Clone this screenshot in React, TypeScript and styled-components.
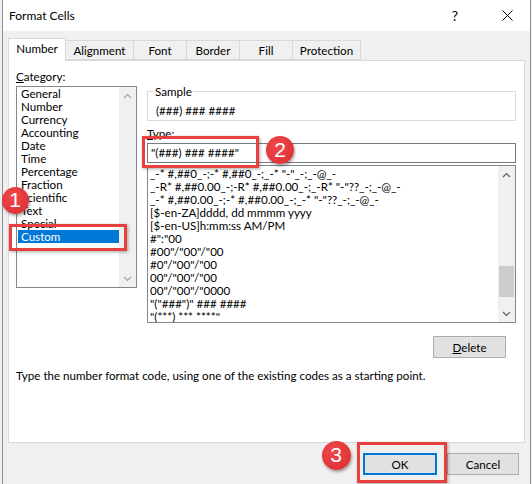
import styled, { createGlobalStyle } from 'styled-components';

const GlobalStyle = createGlobalStyle`
  html, body {
    margin: 0;
    padding: 0;
  }
  body {
    font-family: Lato, "Noto Sans", "Liberation Sans", sans-serif;
    font-size: 11.6px;
    color: #000;
    background: #f0f0f0;
  }
`;

const Page = styled.div`
    position: relative;
    width: 532px;
    height: 484px;
    overflow: hidden;
    padding-left: 2px;
    box-sizing: border-box;
`;

const Window = styled.div`
    width: 529px;
    height: 484px;
    box-sizing: border-box;
    background: #f0f0f0;
    border-left: 1px solid #8f8f8f;
    border-right: 1px solid #8f8f8f;
    display: flex;
    flex-direction: column;
`;

const TitleBar = styled.div`
    height: 31px;
    background: #fff;
    display: flex;
    align-items: center;
    padding-left: 6px;
    font-size: 12px;
`;

const Title = styled.span`
    flex: 1;
`;

const TitleButton = styled.div<{ $gap?: number }>`
    width: 46px;
    height: 31px;
    margin-right: ${p => p.$gap || 0}px;
    display: flex;
    align-items: center;
    justify-content: center;
    font-size: 14px;
`;

const Body = styled.div`
    padding: 7px 5px 0 5px;
    display: flex;
    flex-direction: column;
`;

const TabRow = styled.div`
    display: flex;
    align-items: flex-end;
    height: 22px;
`;

const Tab = styled.div<{ $active?: boolean; $w: number }>`
    width: ${p => p.$w}px;
    height: ${p => (p.$active ? 23 : 20)}px;
    margin-bottom: ${p => (p.$active ? -1 : 0)}px;
    margin-left: -1px;
    box-sizing: border-box;
    border: 1px solid #d9d9d9;
    border-bottom: ${p => (p.$active ? 'none' : '1px solid #d9d9d9')};
    background: ${p => (p.$active ? '#fff' : '#f0f0f0')};
    position: relative;
    z-index: ${p => (p.$active ? 2 : 1)};
    display: flex;
    align-items: ${p => (p.$active ? 'flex-start' : 'center')};
    padding-top: ${p => (p.$active ? 3 : 0)}px;
    justify-content: center;

    &:first-child {
        margin-left: 0;
    }
`;

const Panel = styled.div`
    height: 383px;
    box-sizing: border-box;
    background: #fff;
    border: 1px solid #d9d9d9;
    display: grid;
    grid-template-columns: 121px 369px;
    align-content: start;
    column-gap: 10px;
    padding: 0 7px;
`;

const Column = styled.div<{ $top: number }>`
    display: flex;
    flex-direction: column;
    padding-top: ${p => p.$top}px;
`;

const Label = styled.div`
    line-height: 15px;
    height: 15px;

    u {
        text-decoration: underline;
    }
`;

const ListBox = styled.div<{ $h: number }>`
    height: ${p => p.$h}px;
    margin-top: 2px;
    box-sizing: border-box;
    border: 1px solid #828790;
    display: flex;
    background: #fff;
`;

const Items = styled.div<{ $pad: number }>`
    flex: 1;
    padding: ${p => p.$pad}px 0 0 1px;
    overflow: hidden;
`;

const Item = styled.div<{ $selected?: boolean; $indent?: number }>`
    height: 13px;
    line-height: 13px;
    padding-left: ${p => p.$indent ?? 3}px;
    white-space: nowrap;
    background: ${p => (p.$selected ? '#0078d7' : 'transparent')};
    color: ${p => (p.$selected ? '#fff' : '#000')};
`;

const Scrollbar = styled.div`
    width: 17px;
    background: #f0f0f0;
    display: flex;
    flex-direction: column;
`;

const ScrollArrow = styled.div`
    height: 17px;
    display: flex;
    align-items: center;
    justify-content: center;
`;

const Track = styled.div`
    flex: 1;
    display: flex;
    flex-direction: column;
`;

const Thumb = styled.div<{ $top: number; $h: number }>`
    margin: ${p => p.$top}px 1px 0 1px;
    height: ${p => p.$h}px;
    background: #cdcdcd;
`;

const SampleBox = styled.fieldset`
    margin: 0;
    padding: 0 0 0 8px;
    height: 37px;
    box-sizing: border-box;
    border: 1px solid #dcdcdc;

    legend {
        padding: 0 1px;
        margin-left: -2px;
        line-height: 15px;
    }
`;

const SampleText = styled.div`
    line-height: 15px;
    margin-top: 4px;
`;

const TypeLabel = styled(Label)`
    margin-top: 5px;
`;

const TypeInput = styled.div`
    margin-top: 2px;
    height: 20px;
    box-sizing: border-box;
    border: 1px solid #7a7a7a;
    padding-left: 3px;
    line-height: 18px;
`;

const Button = styled.div<{ $w: number; $default?: boolean }>`
    width: ${p => p.$w}px;
    height: 22px;
    box-sizing: border-box;
    background: #e1e1e1;
    border: 1px solid ${p => (p.$default ? '#0078d7' : '#adadad')};
    box-shadow: ${p => (p.$default ? 'inset 0 0 0 1px #0078d7' : 'none')};
    display: flex;
    align-items: center;
    justify-content: center;

    u {
        text-decoration: underline;
    }
`;

const DeleteRow = styled.div`
    display: flex;
    justify-content: flex-end;
    padding-right: 10px;
    margin-top: 13px;
`;

const Hint = styled.div`
    grid-column: 1 / -1;
    margin-top: 10px;
    line-height: 15px;
`;

const Footer = styled.div`
    display: flex;
    justify-content: flex-end;
    gap: 10px;
    padding: 10px 6px 0 0;
`;

const Highlight = styled.div<{ $x: number; $y: number; $w: number; $h: number }>`
    position: absolute;
    left: ${p => p.$x}px;
    top: ${p => p.$y}px;
    width: ${p => p.$w}px;
    height: ${p => p.$h}px;
    box-sizing: border-box;
    border: 3px solid #e8403f;
    box-shadow: 1px 1px 3px rgba(0, 0, 0, 0.35);
    pointer-events: none;
`;

const Badge = styled.div<{ $x: number; $y: number; $d: number }>`
    position: absolute;
    left: ${p => p.$x - p.$d / 2}px;
    top: ${p => p.$y - p.$d / 2}px;
    width: ${p => p.$d}px;
    height: ${p => p.$d}px;
    border-radius: 50%;
    background: radial-gradient(circle at 40% 35%, #f0484a, #d92b2f);
    box-shadow: 1px 2px 3px rgba(0, 0, 0, 0.35);
    color: #fff;
    font-family: "Liberation Sans", Arial, sans-serif;
    font-size: 21px;
    display: flex;
    align-items: center;
    justify-content: center;
`;

const Chevron = ({ up, color }: { up?: boolean; color: string }) => (
    <svg width="9" height="6" viewBox="0 0 9 6">
        <polyline
            points={up ? '1,5 4.5,1.5 8,5' : '1,1 4.5,4.5 8,1'}
            fill="none"
            stroke={color}
            strokeWidth="1.2"
        />
    </svg>
);

const categories = [
    'General', 'Number', 'Currency', 'Accounting', 'Date', 'Time',
    'Percentage', 'Fraction', 'Scientific', 'Text', 'Special', 'Custom',
];

const formats = [
    '_-* #,##0_-;-* #,##0_-;_-* "-"_-;_-@_-',
    '_-R* #,##0.00_-;-R* #,##0.00_-;_-R* "-"??_-;_-@_-',
    '_-* #,##0.00_-;-* #,##0.00_-;_-* "-"??_-;_-@_-',
    '[$-en-ZA]dddd, dd mmmm yyyy',
    '[$-en-US]h:mm:ss AM/PM',
    '#":"00',
    '#00"/"00"/"00',
    '#0"/"00"/"00',
    '00"/"00"/"00',
    '00"/"00"/"0000',
    '"("###")" ### ####',
    '"(***) *** ****"',
];

const tabs = [
    { name: 'Number', w: 58 },
    { name: 'Alignment', w: 69 },
    { name: 'Font', w: 54 },
    { name: 'Border', w: 54 },
    { name: 'Fill', w: 54 },
    { name: 'Protection', w: 69 },
];

const App = () => {
    return (
        <Page>
            <GlobalStyle />
            <Window>
                <TitleBar>
                    <Title>Format Cells</Title>
                    <TitleButton $gap={6}>?</TitleButton>
                    <TitleButton>
                        <svg width="11" height="11" viewBox="0 0 11 11">
                            <path d="M0.5 0.5 L10.5 10.5 M10.5 0.5 L0.5 10.5" stroke="#000" strokeWidth="1" />
                        </svg>
                    </TitleButton>
                </TitleBar>
                <Body>
                    <TabRow>
                        {tabs.map((t, i) => (
                            <Tab key={t.name} $w={t.w} $active={i === 0}>{t.name}</Tab>
                        ))}
                    </TabRow>
                    <Panel>
                        <Column $top={8}>
                            <Label><u>C</u>ategory:</Label>
                            <ListBox $h={202}>
                                <Items $pad={0}>
                                    {categories.map(c => (
                                        <Item key={c} $selected={c === 'Custom'}>{c}</Item>
                                    ))}
                                </Items>
                                <Scrollbar>
                                    <ScrollArrow><Chevron up color="#a3a3a3" /></ScrollArrow>
                                    <Track />
                                    <ScrollArrow><Chevron color="#a3a3a3" /></ScrollArrow>
                                </Scrollbar>
                            </ListBox>
                        </Column>
                        <Column $top={23}>
                            <SampleBox>
                                <legend>Sample</legend>
                                <SampleText>(###) ### ####</SampleText>
                            </SampleBox>
                            <TypeLabel><u>T</u>ype:</TypeLabel>
                            <TypeInput>"(###) ### ####"</TypeInput>
                            <ListBox $h={158}>
                                <Items $pad={1}>
                                    {formats.map(f => (
                                        <Item key={f} $indent={1}>{f}</Item>
                                    ))}
                                </Items>
                                <Scrollbar>
                                    <ScrollArrow><Chevron up color="#606060" /></ScrollArrow>
                                    <Track>
                                        <Thumb $top={83} $h={31} />
                                    </Track>
                                    <ScrollArrow><Chevron color="#606060" /></ScrollArrow>
                                </Scrollbar>
                            </ListBox>
                            <DeleteRow>
                                <Button $w={73}><u>D</u>elete</Button>
                            </DeleteRow>
                        </Column>
                        <Hint>Type the number format code, using one of the existing codes as a starting point.</Hint>
                    </Panel>
                    <Footer>
                        <Button $w={74} $default>OK</Button>
                        <Button $w={72}>Cancel</Button>
                    </Footer>
                </Body>
            </Window>

            <Highlight $x={9} $y={224} $w={118} $h={27} />
            <Highlight $x={142} $y={136} $w={117} $h={32} />
            <Highlight $x={357} $y={442} $w={90} $h={41} />
            <Badge $x={15} $y={200} $d={27}>1</Badge>
            <Badge $x={280} $y={150} $d={28}>2</Badge>
            <Badge $x={336} $y={455} $d={29}>3</Badge>
        </Page>
    );
};

export default App;
